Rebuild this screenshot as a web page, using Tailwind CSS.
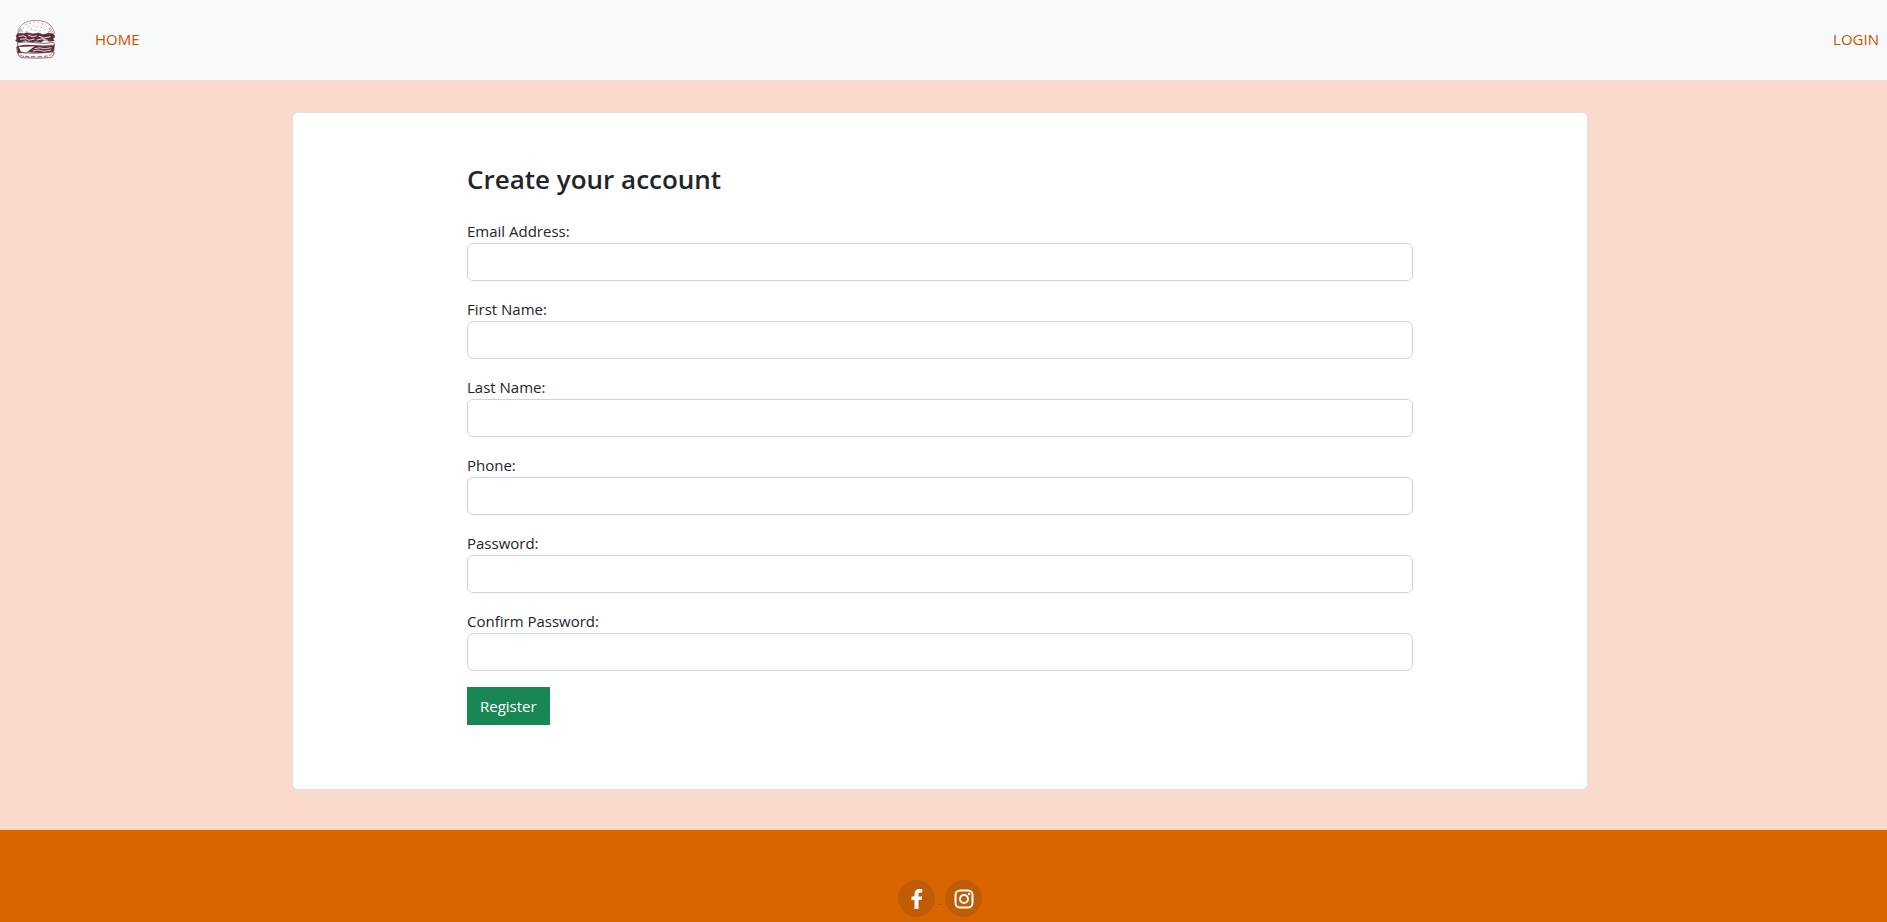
<!DOCTYPE html>
<html lang="en">
<head>
<meta charset="utf-8">
<meta name="viewport" content="width=device-width, initial-scale=1">
<title>Create your account</title>
<script src="https://cdn.jsdelivr.net/npm/@tailwindcss/browser@4"></script>
</head>
<body class="flex min-h-screen flex-col overflow-x-hidden bg-[#fadacd] font-['Open_Sans','Noto_Sans',sans-serif] text-[15px] leading-6 text-[#212529]">
  <header class="bg-[#f8f9fa]">
    <nav class="flex h-20 items-center pr-2 pb-[3px] pl-[15px] text-[#cc5200]">
      <a href="#" aria-label="Burger home" class="mr-10">
        <svg class="h-10 w-10" viewBox="20 20 116 120" preserveAspectRatio="none" fill="none" stroke="#5d2a33" stroke-linecap="round" stroke-linejoin="round">
          <path d="M28 64C28 42 48 24 80 24s52 16 54 40c-30 6-76 6-106 0Z" fill="#fdfbfb" stroke-width="1.500"/>
          <path d="M50 38l3-2M62 32l3 1M74 29l3 1M87 31l2-1M98 34l3 2M109 40l2 2M118 48l2 3M44 48l2-2M58 45l2-2M72 40l2-2M83 44l2-1M95 46l3-1M106 52l2-1M66 50l3 1M38 56l3 1M52 57l3 0M78 54l3 0M91 56l3-1M119 58l2 1M32 56l5-8M30 61l9-9M126 62l-5-10M129 58l-7-12M115 62l5-6" stroke-width="2" opacity=".6"/>
          <path d="M24 68q8-8 20-4l12-3 15 4 18-3 12 5 16-4 14 2 5 8-6 6 4 6-12 2-16-4-12 7-16-3-12 4-16-7-16 7-12-5 3-7Z" fill="#5d2a33" stroke-width="1.500"/>
          <path d="M32 72l13-2 8 5M58 68l12 5 12-3M90 72l14 5 18-4M36 81l15-2 10 5 15-4M84 83l15-4 15 5" stroke="#e6d8da" stroke-width="3"/>
          <path d="M28 91q25-5 50 0t54-1l3 8q-28 5-53 2t-52 2Z" fill="#fdfbfb" stroke-width="2"/>
          <path d="M26 103q24-7 50-3t58 0l-2 17q-26 7-54 3t-50 2Z" fill="#5d2a33" stroke-width="2"/>
          <path d="M30 103l49-2-28 22-14-5Z" fill="#fdfbfb" stroke-width="1.500"/>
          <path d="M77 109l14-3 14 3 20-3M72 116l15-3 17 4 20-4" stroke="#d8c5c8" stroke-width="3"/>
          <path d="M29 121q50 5 104-2-1 16-12 17-41 3-82 0-9-2-10-15Z" fill="#fdfbfb" stroke-width="2"/>
          <path d="M36 130l9 2M50 132l10 1M67 133l11 0M87 133l10 0M105 132l9-1M120 129l5-3" stroke-width="2"/>
        </svg>
      </a>
      <a href="#">HOME</a>
      <a href="#" class="ml-auto">LOGIN</a>
    </nav>
  </header>

  <main class="flex grow justify-center pt-8 pr-[7px] pb-10">
    <section class="w-full max-w-[1296px] rounded-md border border-[#dee2e6] bg-white px-8 pt-12 pb-16 lg:px-[174px]">
      <form>
        <h1 class="mb-[22px] text-[26px] leading-9 font-semibold">Create your account</h1>
        <div class="flex flex-col gap-4">
          <div class="flex flex-col">
            <label for="email">Email Address:</label>
            <input id="email" type="email" class="h-[38px] rounded-md border border-[#ced4da] bg-white px-3">
          </div>
          <div class="flex flex-col">
            <label for="first">First Name:</label>
            <input id="first" type="text" class="h-[38px] rounded-md border border-[#ced4da] bg-white px-3">
          </div>
          <div class="flex flex-col">
            <label for="last">Last Name:</label>
            <input id="last" type="text" class="h-[38px] rounded-md border border-[#ced4da] bg-white px-3">
          </div>
          <div class="flex flex-col">
            <label for="phone">Phone:</label>
            <input id="phone" type="tel" class="h-[38px] rounded-md border border-[#ced4da] bg-white px-3">
          </div>
          <div class="flex flex-col">
            <label for="password">Password:</label>
            <input id="password" type="password" class="h-[38px] rounded-md border border-[#ced4da] bg-white px-3">
          </div>
          <div class="flex flex-col">
            <label for="confirm">Confirm Password:</label>
            <input id="confirm" type="password" class="h-[38px] rounded-md border border-[#ced4da] bg-white px-3">
          </div>
          <button type="submit" class="h-[38px] self-start bg-[#198754] px-[13px] text-white">Register</button>
        </div>
      </form>
    </section>
  </main>

  <footer class="flex items-center justify-center gap-[3px] bg-[#d96500] pt-[50px] pr-[7px] pb-[5px]">
    <a href="#" aria-label="Facebook" class="flex size-[37px] items-center justify-center rounded-full bg-[#bf5c05] text-white">
      <svg class="h-5 w-3" viewBox="0 0 12 20" fill="currentColor"><path d="M3.500 20v-9H.5V7.500h3V5C3.500 1.800 5.300 0 8.200 0h3v3.500H9.300C7.900 3.500 7.500 4.200 7.500 5.300v2.200h3.600l-.6 3.500h-3v9z"/></svg>
    </a>
    <span class="mt-3 h-px w-1 bg-[#b85605]"></span>
    <a href="#" aria-label="Instagram" class="flex size-[37px] items-center justify-center rounded-full bg-[#bf5c05] text-white">
      <svg class="size-5" viewBox="0 0 20 20" fill="none" stroke="currentColor" stroke-width="2"><rect x="1.500" y="1.500" width="17" height="17" rx="4.500"/><circle cx="10" cy="10" r="4"/><circle cx="15" cy="5" r="1.200" fill="currentColor" stroke="none"/></svg>
    </a>
  </footer>
</body>
</html>
